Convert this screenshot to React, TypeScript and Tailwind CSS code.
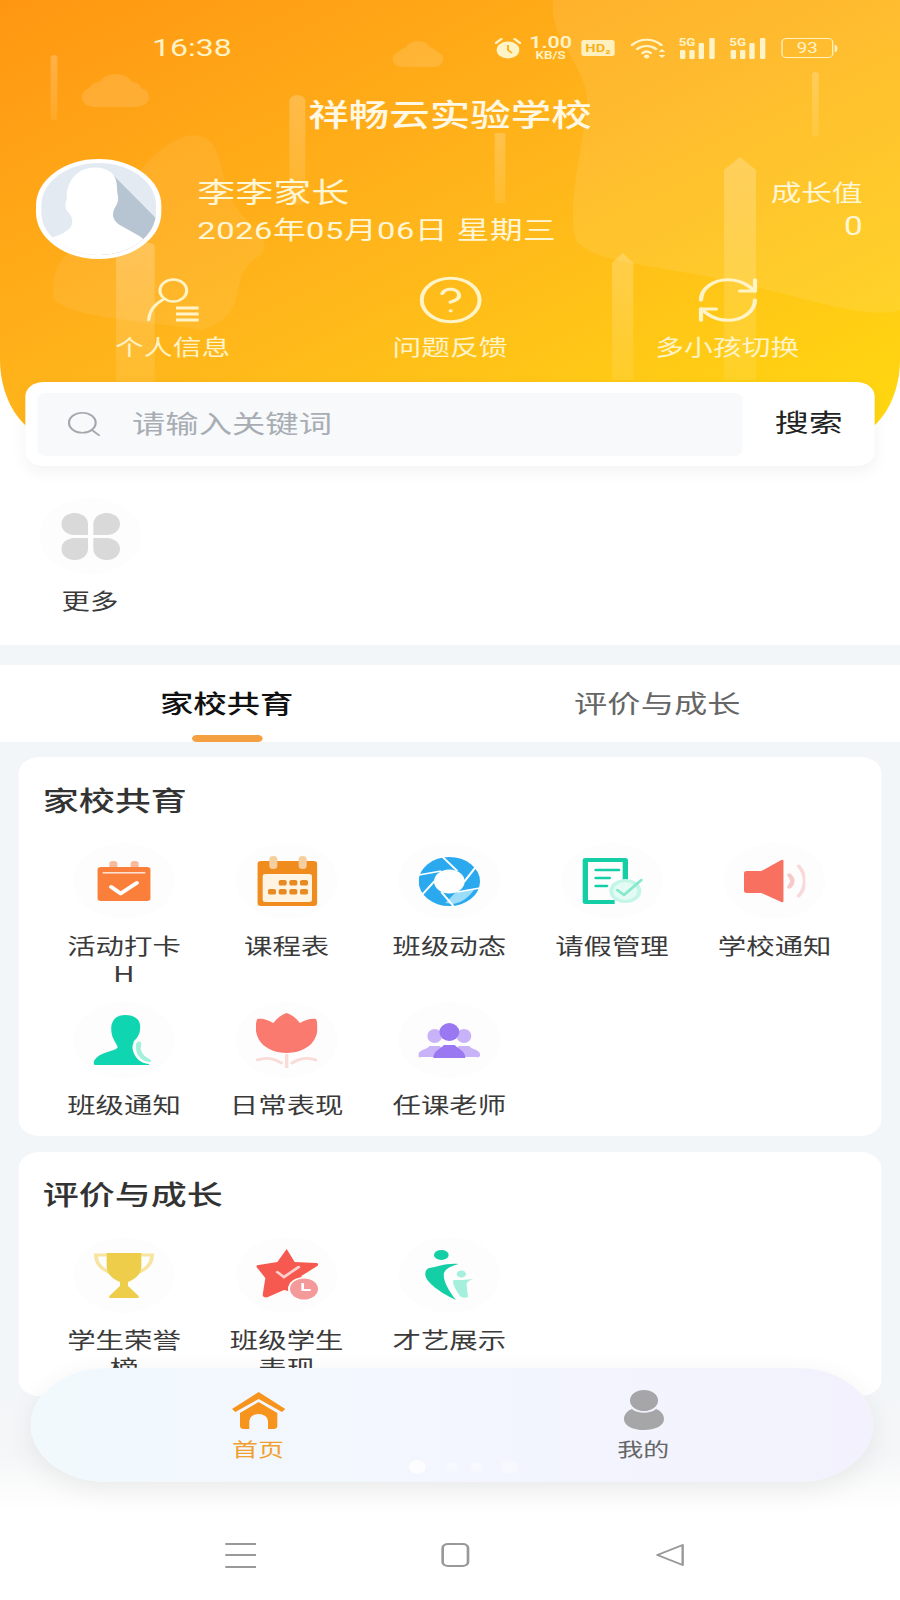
import { CircleHelp, RefreshCw, Search } from 'lucide-react'
import type { ReactNode } from 'react'

const Svg = ({ w, h, children }: { w: number; h: number; children: ReactNode }) => (
  <svg width={w} height={h} viewBox={`0 0 ${w} ${h}`} fill="none">{children}</svg>
)

const CheckIcon = () => (
  <Svg w={40} h={40}>
    <rect x="9" y="0" width="6" height="9" rx="2.5" fill="#f6bb9c" />
    <rect x="25" y="0" width="6" height="9" rx="2.5" fill="#f6bb9c" />
    <rect x="0" y="6" width="40" height="34" rx="3" fill="#f97f3b" />
    <rect x="4" y="11" width="32" height="1.6" fill="#fde0cf" />
    <path d="M10.5 26l7 6.5L29.5 22" stroke="#fff" strokeWidth="3.6" strokeLinecap="round" strokeLinejoin="round" />
  </Svg>
)

const TimetableIcon = () => (
  <Svg w={45} h={50}>
    <rect x="0" y="5" width="45" height="45" rx="3" fill="#f08b1e" />
    <rect x="4" y="18" width="37" height="28" rx="2" fill="#fff3e2" />
    <rect x="9" y="0" width="6" height="13" rx="3" fill="#f5cf9f" />
    <rect x="31" y="0" width="6" height="13" rx="3" fill="#f5cf9f" />
    {[16, 24, 32].map(x => <rect key={x} x={x} y="24" width="6" height="5.5" rx="1.5" fill="#e88a22" />)}
    {[8, 16, 24, 32].map(x => <rect key={x} x={x} y="33" width="6" height="5.5" rx="1.5" fill="#e88a22" />)}
  </Svg>
)

const ApertureIcon = () => (
  <Svg w={46} h={49}>
    <ellipse cx="23" cy="24.5" rx="23" ry="24.5" fill="#2aa9ef" />
    <path d="M28 35l14-3c-3 6-8 13-16 15l-6-1z" fill="#9bdcf8" />
    <ellipse cx="23" cy="24.5" rx="11.5" ry="12" fill="#fff" />
    <g stroke="#fff" strokeWidth="1.6">
      <path d="M29 14L18 0" /><path d="M34 25L44 8" /><path d="M29 35l17-4" />
      <path d="M17 35l9 14" /><path d="M12 24L1 40" /><path d="M17 14L0 18" />
    </g>
  </Svg>
)

const LeaveIcon = () => (
  <Svg w={46} h={46}>
    <path d="M3 0h30a2 2 0 0 1 2 2v20h-4V4H5v38h20v4H3a2 2 0 0 1-2-2V2a2 2 0 0 1 2-2z" fill="#14cfa6" />
    <path d="M11 12h17M11 20h10M11 28h8" stroke="#14cfa6" strokeWidth="2.6" strokeLinecap="round" />
    <ellipse cx="33" cy="33" rx="12" ry="12" fill="#c4f5e7" />
    <ellipse cx="33" cy="33" rx="9" ry="9" fill="#e4fbf4" />
    <path d="M27 32l5 5 13-15" stroke="#84e8cd" strokeWidth="2.4" strokeLinecap="round" strokeLinejoin="round" />
  </Svg>
)

const SpeakerIcon = () => (
  <Svg w={46} h={44}>
    <path d="M2 12h11L28 1a1 1 0 0 1 1.6 1v40a1 1 0 0 1-1.6 1L13 34H2a2 2 0 0 1-2-2V14a2 2 0 0 1 2-2z" fill="#f8705f" />
    <path d="M34 16c3 4 3 8 0 12" stroke="#f8c9c9" strokeWidth="3.4" strokeLinecap="round" />
    <path d="M41 7c6 9 6 21 0 30" stroke="#f9dada" strokeWidth="3" strokeLinecap="round" />
  </Svg>
)

const ContactIcon = () => (
  <Svg w={46} h={50}>
    <path d="M24 0c8 0 12 6 11 14 0 6-3 10-5 13 0 3 4 5 6 7 1 4 3 10 6 16H2c-3 0-2-5 1-8 4-5 13-6 15-9 1-2-3-7-4-13C12 9 15 0 24 0z" fill="#0fd6b0" />
    <path d="M32 26c3-2 5 0 5 2 0 2-1 3 0 7 1 4 3 6 6 8 2 1 3 3 1 5-3 2-9 0-12-6-3-6-4-13 0-16z" fill="#ffffff" />
    <path d="M33 27c2-1 3 0 3 2s-1 4 0 7 3 6 6 8c2 1 2 3 0 3-3 0-7-3-9-8-1-4-2-10 0-12z" fill="#a4f0dd" />
  </Svg>
)

const TulipIcon = () => (
  <Svg w={46} h={55}>
    <path d="M23 0c5 2 8 7 10 10 4-3 8-5 12-4 2 6 2 16-3 24-4 6-11 10-19 10S8 36 4 30C-1 22-1 12 1 6c4-1 8 1 12 4 2-3 5-8 10-10z" fill="#fb7a70" />
    <path d="M1 47c6-3 12-2 18 3M45 47c-6-3-12-2-18 3M23 42v13" stroke="#f9dbd8" strokeWidth="2.6" strokeLinecap="round" />
  </Svg>
)

const TeachersIcon = () => (
  <Svg w={46} h={35}>
    <ellipse cx="12" cy="13" rx="5.5" ry="7" fill="#c9b3f8" />
    <path d="M0 30c2-4 7-4 8-7h8c1 3 3 4 5 5v6H2a2 2 0 0 1-2-4z" fill="#c9b3f8" />
    <ellipse cx="34" cy="13" rx="5.5" ry="7" fill="#c9b3f8" />
    <path d="M46 30c-2-4-7-4-8-7h-8c-1 3-3 4-5 5v6h18a2 2 0 0 0 2-4z" fill="#c9b3f8" />
    <ellipse cx="23" cy="9" rx="7.5" ry="9" fill="#9a78f2" />
    <path d="M11 35c0-7 5-9 8-13h8c3 4 8 6 8 13z" fill="#9a78f2" />
  </Svg>
)

const TrophyIcon = () => (
  <Svg w={46} h={46}>
    <path d="M10 3H2c0 8 4 15 12 18M36 3h8c0 8-4 15-12 18" stroke="#f6e4a0" strokeWidth="3" />
    <path d="M10 1h26v14c0 8-6 13-10 15v4l8 10v2H12v-2l8-10v-4c-4-2-10-7-10-15z" fill="#eecd4a" />
  </Svg>
)

const StarIcon = () => (
  <Svg w={47} h={52}>
    <path d="M23 0l6 13 16 1c2 0 2 2 1 3L34 27l3 16c0 2-2 3-3 2l-13-4-12 7c-2 1-4 0-4-2l2-17L1 19c-1-1-1-3 1-3l14-3z" fill="#f6594f" />
    <path d="M16 23l5 5 11-10" stroke="#fbd0cc" strokeWidth="2.4" strokeLinecap="round" />
    <circle cx="36" cy="40" r="12" fill="#fff" />
    <circle cx="36" cy="40" r="10.5" fill="#f59a9a" />
    <path d="M35 34v7h6" stroke="#fff" strokeWidth="2" />
  </Svg>
)

const TalentIcon = () => (
  <Svg w={37} h={50}>
    <ellipse cx="12" cy="5" rx="5.5" ry="5" fill="#14cfa6" />
    <path d="M3 18c6-1 12-5 22-4-6 2-10 5-11 9-1 7 3 17 9 27C13 44 2 34 0 26c-1-4 1-7 3-8z" fill="#14cfa6" />
    <ellipse cx="27" cy="24" rx="3.5" ry="3.5" fill="#a4f0dd" />
    <path d="M21 30c4 0 9 0 15-1-4 2-5 3-5 6l1 12c-3 2-6 0-7-3-2-4-5-10-4-14z" fill="#a4f0dd" />
  </Svg>
)

const MoreIcon = () => (
  <Svg w={44} h={47}>
    <path d="M10 0c6 0 10 5 10 11v11H10C4 22 0 17 0 11S4 0 10 0z" fill="#d9d9d9" />
    <path d="M34 0c-6 0-10 5-10 11v11h10c6 0 10-5 10-11S40 0 34 0z" fill="#d9d9d9" />
    <path d="M10 47c6 0 10-5 10-11V25H10C4 25 0 30 0 36s4 11 10 11z" fill="#d9d9d9" />
    <path d="M34 47c-6 0-10-5-10-11V25h10c6 0 10 5 10 11s-4 11-10 11z" fill="#d9d9d9" />
  </Svg>
)

const schoolItems = [
  { label: '活动打卡H', icon: <CheckIcon /> },
  { label: '课程表', icon: <TimetableIcon /> },
  { label: '班级动态', icon: <ApertureIcon /> },
  { label: '请假管理', icon: <LeaveIcon /> },
  { label: '学校通知', icon: <SpeakerIcon /> },
  { label: '班级通知', icon: <ContactIcon /> },
  { label: '日常表现', icon: <TulipIcon /> },
  { label: '任课老师', icon: <TeachersIcon /> },
]

const growthItems = [
  { label: '学生荣誉榜', icon: <TrophyIcon /> },
  { label: '班级学生表现', icon: <StarIcon /> },
  { label: '才艺展示', icon: <TalentIcon /> },
]

function GridItem({ label, icon }: { label: string; icon: ReactNode }) {
  return (
    <div className="flex w-[122px] flex-col items-center">
      <div className="flex h-[76px] w-[76px] items-center justify-center rounded-full bg-[#fdfdfd]">{icon}</div>
      <div className="mt-[14px] w-[90px] text-center text-[21.3px] leading-[28px] text-[#3a3a3a]">{label}</div>
    </div>
  )
}

function SectionCard({ title, items, className }: { title: string; items: { label: string; icon: ReactNode }[]; className: string }) {
  return (
    <section className={`mx-[14px] rounded-[16px] bg-white pl-[18px] ${className}`}>
      <h2 className="text-[27px] font-medium leading-[36px] text-[#333]">{title}</h2>
      <div className="mt-[23px] grid grid-cols-[repeat(5,122px)] gap-y-[13px]">
        {items.map(item => <GridItem key={item.label} {...item} />)}
      </div>
    </section>
  )
}

function SignalIcon() {
  return (
    <Svg w={28} h={23}>
      <text x="0" y="9" fontSize="10" fontWeight="700" fill="#fff3c8">5G</text>
      <rect x="1" y="13" width="4" height="9" rx="1" fill="#fff3c8" />
      <rect x="8" y="13" width="4" height="9" rx="1" fill="#fff3c8" />
      <rect x="15" y="6" width="4" height="16" rx="1" fill="#fff3c8" />
      <rect x="23" y="1" width="4" height="21" rx="1" fill="#fff3c8" />
    </Svg>
  )
}

function StatusBar() {
  return (
    <div className="relative flex h-[36px] items-center justify-between pl-[114px] pr-[47px] text-[#fff3c8]">
      <span className="text-[24px] leading-none">16:38</span>
      <div className="flex items-center">
        <Svg w={20} h={21}>
          <path d="M1 5l4-4M19 5l-4-4" stroke="#fff3c8" strokeWidth="2" strokeLinecap="round" />
          <circle cx="10" cy="12" r="8.5" fill="#fff3c8" />
          <path d="M10 7v5l3 3" stroke="#ffb01c" strokeWidth="1.5" />
        </Svg>
        <div className="ml-[7px] flex w-[30px] flex-col items-center font-semibold leading-none">
          <span className="text-[16px] leading-[14px]">1.00</span>
          <span className="text-[10px] leading-[11px]">KB/S</span>
        </div>
        <div className="ml-[8px] flex h-[16px] w-[25px] items-center justify-center rounded-[2px] bg-[#fff0c0] text-[11px] font-bold leading-none text-[#f9b01c]">HD₂</div>
        <div className="ml-[12px]">
          <Svg w={27} h={22}>
            <path d="M1 8c6-7 16-7 22 0M5 12c4-4 10-4 14 0M9 16c2-2 4-2 6 0" stroke="#fff3c8" strokeWidth="2.2" strokeLinecap="round" />
            <circle cx="12" cy="19.5" r="2" fill="#fff3c8" />
            <path d="M21 15l2.5-3 2.5 3zM21 18l2.5 3 2.5-3z" fill="#fff3c8" />
          </Svg>
        </div>
        <div className="ml-[9px]"><SignalIcon /></div>
        <div className="ml-[10px]"><SignalIcon /></div>
        <div className="ml-[11px] flex items-center">
          <div className="flex h-[20px] w-[39px] items-center justify-center rounded-[4px] border border-[#fff0c0] text-[14px] leading-none">93</div>
          <div className="ml-px h-[7px] w-[2px] rounded-r-full bg-[#fff0c0]" />
        </div>
      </div>
    </div>
  )
}

function HeaderArt() {
  return (
    <svg className="absolute inset-0" width="675" height="440" viewBox="0 0 675 440" fill="none">
      <defs>
        <linearGradient id="bar" x1="0" y1="0" x2="0" y2="1">
          <stop offset="0" stopColor="#fff" stopOpacity="0.22" />
          <stop offset="1" stopColor="#fff" stopOpacity="0.08" />
        </linearGradient>
      </defs>
      <path d="M415 0C410 40 445 70 440 110C435 160 425 210 432 240C445 265 500 265 560 285C610 300 650 320 675 310V0Z" fill="#fff" fillOpacity="0.09" />
      <path d="M140 136C165 130 165 165 170 190C178 225 215 240 190 260C170 280 190 315 150 330C110 320 60 320 40 300C38 270 45 260 60 240C90 210 105 150 140 136Z" fill="#fff" fillOpacity="0.07" />
      <path d="M70 107a10 10 0 0 1-3-19a8 8 0 0 1 8-6a13 13 0 0 1 24 0a8 8 0 0 1 7 6a10 10 0 0 1-3 19z" fill="#fff" fillOpacity="0.13" />
      <path d="M301 67a8 8 0 0 1-2-15a6 6 0 0 1 5-4a10 10 0 0 1 19 0a6 6 0 0 1 5 4a8 8 0 0 1-2 15z" fill="#fff" fillOpacity="0.13" />
      <rect x="38" y="55" width="5" height="65" rx="2.5" fill="url(#bar)" />
      <rect x="217" y="95" width="12" height="110" rx="6" fill="url(#bar)" />
      <rect x="371" y="133" width="8" height="70" fill="url(#bar)" />
      <rect x="609" y="72" width="5" height="65" rx="2.5" fill="url(#bar)" />
      <path d="M543 170l12-13 12 13v210h-24z" fill="url(#bar)" />
      <path d="M459 263l8-10 8 10v117h-16z" fill="url(#bar)" />
      <rect x="87" y="243" width="29" height="140" rx="4" fill="url(#bar)" />
    </svg>
  )
}

function Shortcut({ label, icon }: { label: string; icon: ReactNode }) {
  return (
    <div className="flex w-[208px] flex-col items-center text-[#fff3c8]">
      <div className="flex h-[44px] items-center justify-center">{icon}</div>
      <span className="mt-[2px] text-[21.6px] leading-[48px]">{label}</span>
    </div>
  )
}

function Header() {
  return (
    <header className="relative h-[440px] overflow-hidden rounded-bl-[45px_80px] rounded-br-[45px_80px] bg-linear-to-br from-[#ff9612] via-[#ffb61b] to-[#ffd90e]">
      <HeaderArt />
      <div className="relative pt-[30px]">
        <StatusBar />
        <h1 className="mt-[30px] text-center text-[30.4px] font-medium leading-[40px] text-[#fff8e5]">祥畅云实验学校</h1>
        <div className="mt-[23px] flex h-[100px] pl-[27px] pr-[28px]">
          <div className="h-[100px] w-[94px] shrink-0 overflow-hidden rounded-full border-[4px] border-white bg-[#e3eaf1]">
            <svg width="86" height="92" viewBox="0 0 94 100" preserveAspectRatio="none">
              <path d="M55 8L94 60V100H50z" fill="#b7c4d1" />
              <path d="M44 5c11 0 18 7 18 21 0 6 1 9 1 13 0 5-3 9-4 14-1 6 1 11 6 15l15 11c3 3 8 6 10 21H0V84c10-3 19-7 24-14 3-6 1-13-3-18-2-4-1-9 0-14-1-15 7-33 23-33z" fill="#fff" />
            </svg>
          </div>
          <div className="ml-[27px] flex-1 pt-[17px]">
            <div className="text-[28.5px] leading-[36px] text-[#fff6d6]">李李家长</div>
            <div className="mt-[2px] text-[24.5px] leading-[34px] tracking-[0.4px] text-[#fff6d6]">2026年05月06日 星期三</div>
          </div>
          <div className="pt-[20px] text-right text-[#fff6d6]">
            <div className="text-[23px] leading-[30px]">成长值</div>
            <div className="mt-[3px] text-[25px] leading-[30px]">0</div>
          </div>
        </div>
        <div className="mt-[19px] flex justify-center">
          <Shortcut
            label="个人信息"
            icon={
              <svg width="40" height="44" viewBox="0 0 40 44" fill="none" stroke="#fff3c8" strokeWidth="2.4" strokeLinecap="round">
                <ellipse cx="20" cy="12.5" rx="10" ry="11" />
                <path d="M1.5 42C2 32 6 26 13 21" />
                <path d="M22 30h17M22 36h17M22 42h17" strokeWidth="3" strokeLinecap="butt" />
              </svg>
            }
          />
          <Shortcut label="问题反馈" icon={<CircleHelp size={52} strokeWidth={1.4} color="#fff3c8" />} />
          <Shortcut label="多小孩切换" icon={<RefreshCw size={54} strokeWidth={1.4} color="#fff3c8" />} />
        </div>
      </div>
    </header>
  )
}

function SearchAndMore() {
  return (
    <div className="relative z-10 -mt-[58px] h-[263px]">
      <div className="mx-[19px] flex h-[84px] items-center rounded-[14px] bg-white pl-[9px] shadow-[0_6px_14px_rgba(0,0,0,0.05)]">
        <div className="flex h-[63px] w-[529px] items-center rounded-[6px] bg-[#f7f9fb]">
          <Search size={30} strokeWidth={1.3} color="#a3a8ad" className="ml-[20px]" />
          <span className="ml-[21px] text-[25px] leading-none text-[#a8adb3]">请输入关键词</span>
        </div>
        <span className="ml-[24px] text-[25.5px] leading-none text-[#222]">搜索</span>
      </div>
      <div className="ml-[29.5px] mt-[32px] flex w-[76px] flex-col items-center">
        <div className="flex h-[76px] w-[76px] items-center justify-center rounded-full bg-[#fdfdfd]"><MoreIcon /></div>
        <div className="mt-[14px] text-[21.3px] leading-[28px] text-[#3a3a3a]">更多</div>
      </div>
    </div>
  )
}

function Tabs() {
  return (
    <div className="mt-[20px] flex h-[77px] bg-white pl-[8.5px]">
      <div className="flex w-[323px] flex-col items-center pt-[22px]">
        <span className="text-[25px] font-medium leading-[36px] text-[#111]">家校共育</span>
        <span className="mt-[12px] h-[7px] w-[53px] rounded-full bg-[#f5a040]" />
      </div>
      <div className="flex w-[323px] flex-col items-center pt-[22px]">
        <span className="text-[25px] leading-[36px] text-[#666]">评价与成长</span>
      </div>
    </div>
  )
}

function TabBar() {
  return (
    <nav className="absolute left-[22.5px] top-[1368px] z-20 flex h-[114px] w-[632px] rounded-full bg-linear-to-r from-[#f1f9fd] via-[#f3f6fe] to-[#f2f1fd] pl-[26.5px] pt-[22px] shadow-[0_8px_24px_rgba(0,0,0,0.07)]">
      <div className="flex w-[289px] flex-col items-center">
        <svg width="40" height="40" viewBox="0 0 40 40" fill="none">
          <path d="M20 2L0 19l2.5 3L20 9l17.5 13 2.5-3z" fill="#f7941d" />
          <path d="M20 12l14 11v13a3 3 0 0 1-3 3h-4v-8a7 7 0 0 0-14 0v8H9a3 3 0 0 1-3-3V23z" fill="#f7941d" />
        </svg>
        <span className="mt-[8px] text-[19.5px] leading-[26px] text-[#f0a030]">首页</span>
      </div>
      <div className="flex w-[289px] flex-col items-center">
        <svg width="30" height="40" viewBox="0 0 30 40" fill="none">
          <ellipse cx="15" cy="10.5" rx="10.5" ry="10.5" fill="#a6a6a8" />
          <path d="M6 19c4 5 14 5 18 0 4 2 6 6 6 10 0 7-7 11-15 11S0 36 0 29c0-4 2-8 6-10z" fill="#a6a6a8" />
        </svg>
        <span className="mt-[8px] text-[19.5px] leading-[26px] text-[#666]">我的</span>
      </div>
      <span className="absolute left-[284px] top-[92px] h-[14px] w-[12px] rounded-full bg-white/80" />
      <span className="absolute left-[311px] top-[94px] h-[10px] w-[10px] rounded-full bg-white/30" />
      <span className="absolute left-[330px] top-[94px] h-[10px] w-[10px] rounded-full bg-white/30" />
      <span className="absolute left-[352px] top-[92px] h-[14px] w-[14px] rounded-full bg-white/30" />
    </nav>
  )
}

function SystemNav() {
  return (
    <div className="flex h-[90px] items-center justify-center bg-white pl-[8px]">
      <div className="flex w-[161px] justify-center">
        <div className="flex h-[25px] w-[23px] flex-col justify-between">
          <span className="h-[2px] bg-[#999]" />
          <span className="h-[2px] bg-[#999]" />
          <span className="h-[2px] bg-[#999]" />
        </div>
      </div>
      <div className="flex w-[161px] justify-center">
        <div className="h-[24px] w-[21px] rounded-[5px] border-2 border-[#999]" />
      </div>
      <div className="flex w-[161px] justify-center">
        <svg width="21" height="24" viewBox="0 0 21 24" fill="none">
          <path d="M20 2v20L1 12z" stroke="#999" strokeWidth="1.8" strokeLinejoin="round" />
        </svg>
      </div>
    </div>
  )
}

// the whole screen is stretched sideways in the picture, so it is built 675 wide and scaled
export default function App() {
  return (
    <div className="h-[1600px] w-[900px] overflow-hidden">
      <div className="relative h-[1600px] w-[675px] origin-top-left scale-x-[1.33333] bg-[#f3f6f8] font-['Roboto','Noto_Sans_CJK_SC',sans-serif]">
        <div className="h-[645px] bg-white">
          <Header />
          <SearchAndMore />
        </div>
        <Tabs />
        <SectionCard title="家校共育" items={schoolItems} className="mt-[15px] h-[379px] pt-[27px]" />
        <SectionCard title="评价与成长" items={growthItems} className="mt-[16px] h-[244px] overflow-hidden pt-[26px]" />
        <div className="h-[114px] bg-linear-to-b from-[#f3f6f8] via-[#f5f6f7] to-white" />
        <SystemNav />
        <TabBar />
      </div>
    </div>
  )
}
